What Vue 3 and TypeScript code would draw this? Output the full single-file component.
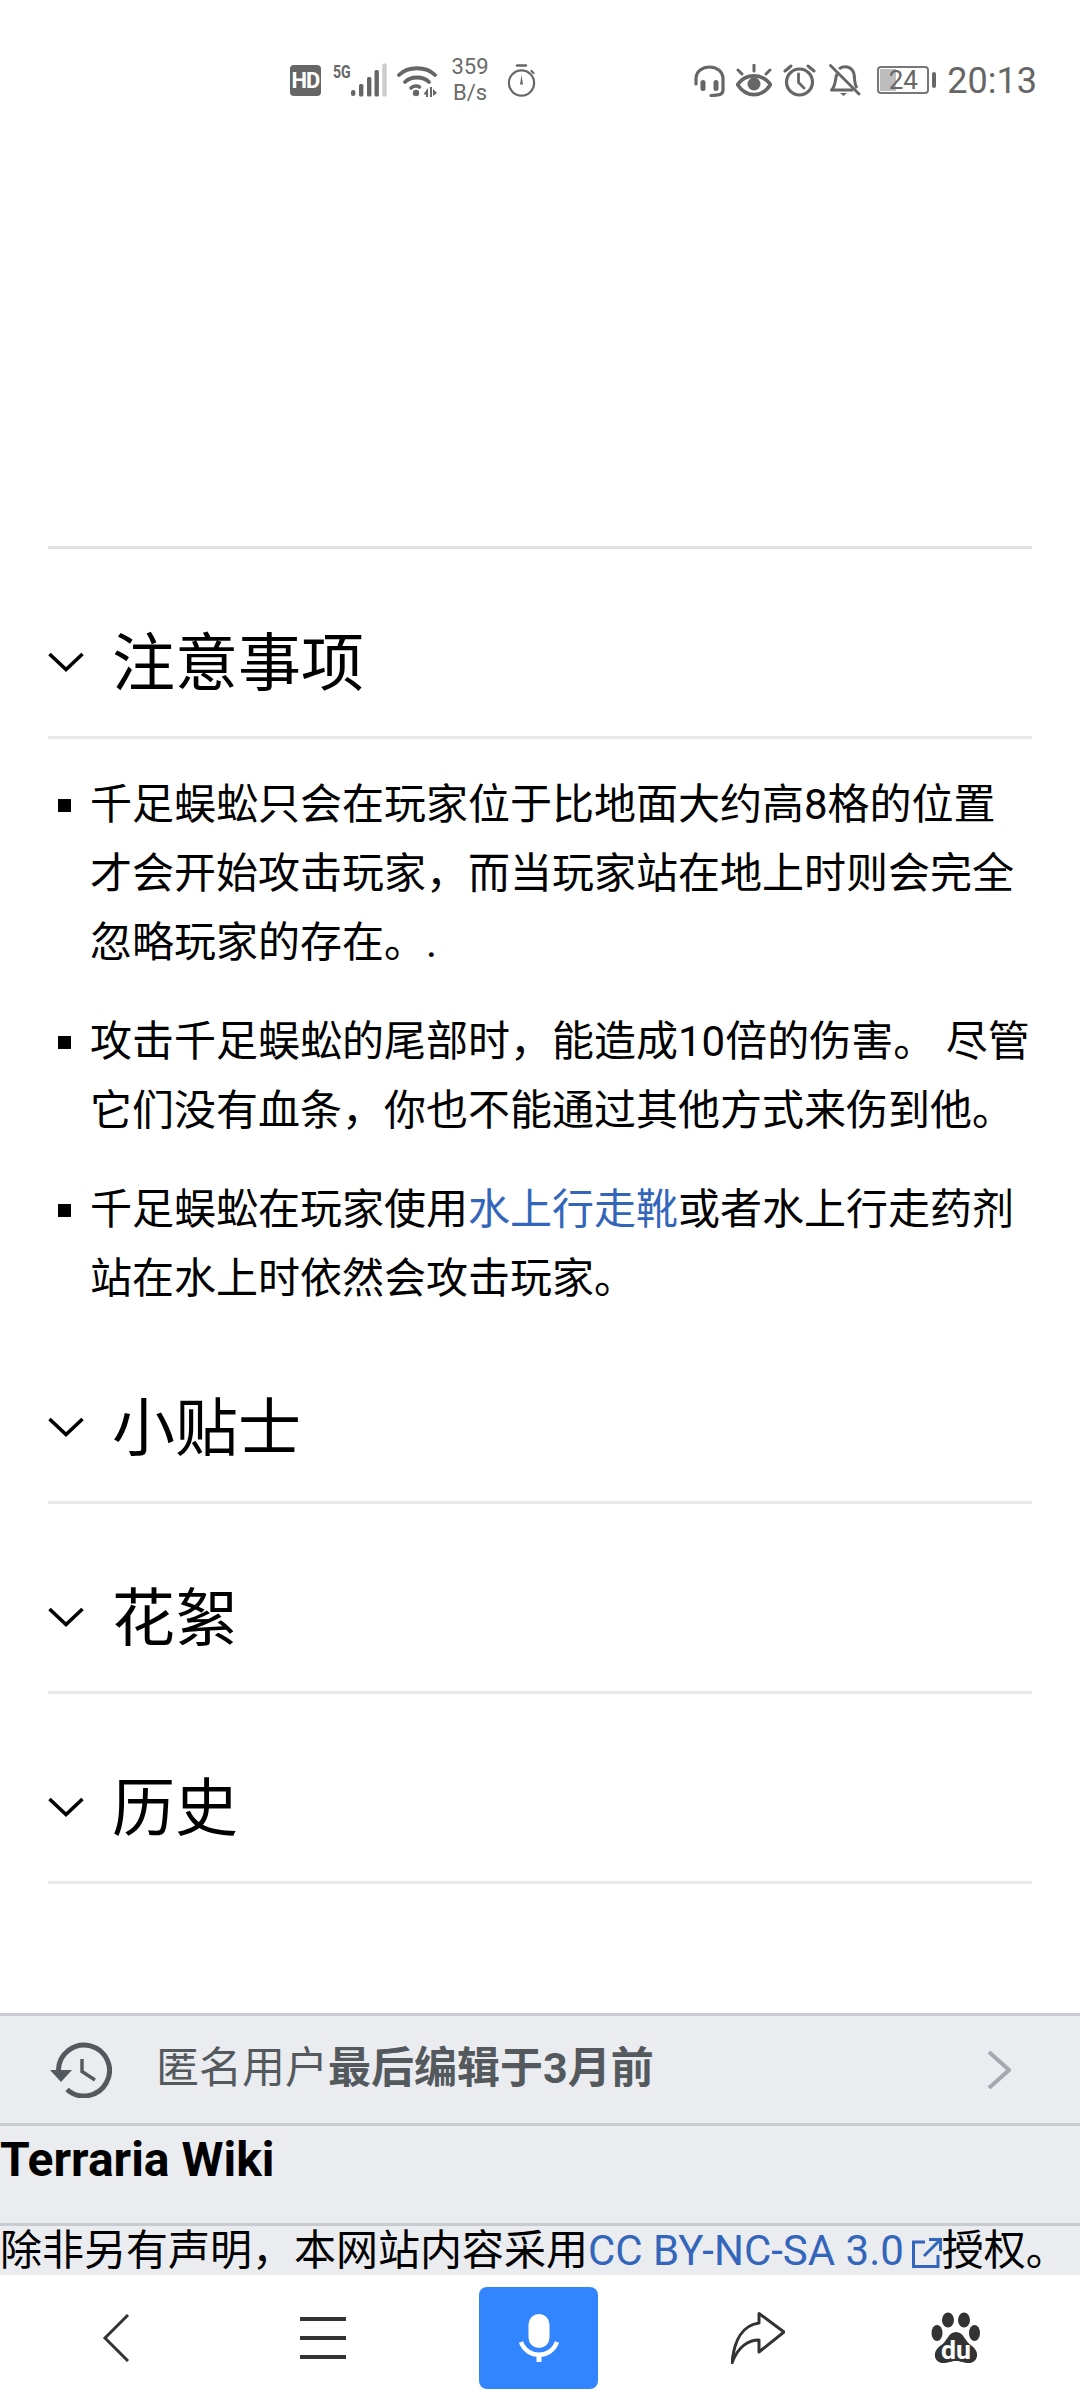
<template>
  <div class="page">
    <div class="status-bar">
      <div class="status-group left">
        <div class="hd">HD</div>
        <div class="sig">
          <span class="five-g">5G</span>
          <svg class="ic" width="36" height="34" viewBox="0 0 36 34">
            <rect x="0" y="27" width="4.4" height="6" rx="2" fill="#666" />
            <rect x="8" y="21" width="4.4" height="12.5" rx="1.5" fill="#666" />
            <rect x="16" y="14" width="4.4" height="19.5" rx="1.5" fill="#666" />
            <rect x="23.5" y="7" width="4.4" height="26.5" rx="1.5" fill="#666" />
            <rect x="31.3" y="0.5" width="4.4" height="33" rx="1.5" fill="#ccc" />
          </svg>
        </div>
        <svg class="ic wifi" width="40" height="34" viewBox="0 0 40 34">
          <path d="M2 12C11 3 29 3 38 12" fill="none" stroke="#666" stroke-width="3.8" stroke-linecap="round" />
          <path d="M8 19C14 13 26 13 32 19" fill="none" stroke="#666" stroke-width="3.8" stroke-linecap="round" />
          <path d="M14 25C16.5 22.5 20.5 22.5 22.5 24" fill="none" stroke="#666" stroke-width="3.6" stroke-linecap="round" />
          <circle cx="19" cy="30" r="3.2" fill="#666" />
          <path d="M27 30.5L31 25V34H29V31.5H27ZM33 24H35V34H33ZM36 26L40 30L36 33Z" fill="#666" />
        </svg>
        <div class="speed"><span>359</span><span>B/s</span></div>
        <svg class="ic timer" width="29" height="33" viewBox="0 0 29 33">
          <circle cx="14.5" cy="19" r="12.6" fill="none" stroke="#666" stroke-width="2.2" />
          <path d="M10 1.5H19" stroke="#666" stroke-width="2.4" stroke-linecap="round" />
          <path d="M24.5 7L26.5 9" stroke="#666" stroke-width="2.2" stroke-linecap="round" />
          <path d="M14.5 11L16 20.5H13Z" fill="#666" />
        </svg>
      </div>
      <div class="status-group right">
        <svg class="ic" width="31" height="33" viewBox="0 0 31 33">
          <path d="M2 20V15C2 -1 29 -1 29 15V26C29 30 26 31.5 17 31.5" fill="none" stroke="#666" stroke-width="3.2" stroke-linecap="round" />
          <rect x="6.5" y="16" width="5" height="11" rx="2.5" fill="#666" />
          <rect x="19.5" y="16" width="5" height="11" rx="2.5" fill="#666" />
        </svg>
        <svg class="ic eye" width="36" height="33" viewBox="0 0 36 33">
          <path d="M1.5 20.5C10 9 26 9 34.5 20.5C26 34 10 34 1.5 20.5Z" fill="none" stroke="#666" stroke-width="3.6" />
          <circle cx="18" cy="20" r="6.5" fill="#666" />
          <path d="M18 1V7M2 6L6 10M34 6L30 10" stroke="#666" stroke-width="3" stroke-linecap="round" />
        </svg>
        <svg class="ic alarm" width="33" height="33" viewBox="0 0 33 33">
          <circle cx="16.5" cy="18" r="13" fill="none" stroke="#666" stroke-width="3.2" />
          <path d="M15.5 10V18.5L21 24" fill="none" stroke="#666" stroke-width="2.8" stroke-linecap="round" />
          <path d="M2 7L8 2M31 7L25 2" stroke="#666" stroke-width="3" stroke-linecap="round" />
        </svg>
        <svg class="ic bell" width="32" height="33" viewBox="0 0 32 33">
          <path d="M8 10C6 14 7 22 2.5 26H24" fill="none" stroke="#666" stroke-width="3" stroke-linejoin="round" />
          <path d="M10 5C14 1 23 2 25 10C26 15 25 20 28 24" fill="none" stroke="#666" stroke-width="3" />
          <path d="M1.5 1.5L30 30" stroke="#666" stroke-width="2.8" stroke-linecap="round" />
          <path d="M11 29H18L14.5 32Z" fill="#666" />
        </svg>
        <div class="battery">
          <div class="battery-box">
            <div class="battery-level"></div>
            <span>24</span>
          </div>
          <div class="battery-tip"></div>
        </div>
        <span class="clock">20:13</span>
      </div>
    </div>

    <main class="content">
      <section class="first-head">
        <div class="heading">
          <svg class="chev" width="36" height="20" viewBox="0 0 36 20">
            <path d="M1.5 2L18 17.5L34.5 2" fill="none" stroke="#000" stroke-width="3.6" />
          </svg>
          <h2>{{ sections[0] }}</h2>
        </div>
      </section>
      <ul class="notes">
        <li>千足蜈蚣只会在玩家位于比地面大约高8格的位置才会开始攻击玩家，而当玩家站在地上时则会完全忽略玩家的存在。.</li>
        <li>攻击千足蜈蚣的尾部时，能造成10倍的伤害。 尽管它们没有血条，你也不能通过其他方式来伤到他。</li>
        <li>千足蜈蚣在玩家使用<a>水上行走靴</a>或者水上行走药剂站在水上时依然会攻击玩家。</li>
      </ul>
      <div v-for="s in sections.slice(1)" :key="s" class="heading">
        <svg class="chev" width="36" height="20" viewBox="0 0 36 20">
          <path d="M1.5 2L18 17.5L34.5 2" fill="none" stroke="#000" stroke-width="3.6" />
        </svg>
        <h2>{{ s }}</h2>
      </div>
    </main>

    <footer class="footer">
      <div class="edit-row">
        <svg width="62" height="56" viewBox="0 0 62 56">
          <path d="M8.5 28A25.5 25.5 0 1 1 17 47.5" fill="none" stroke="#54595d" stroke-width="5" />
          <path d="M0 28H22L11 40Z" fill="#54595d" />
          <path d="M32 17V29.5L45 38" fill="none" stroke="#54595d" stroke-width="3.4" />
        </svg>
        <p class="edit-text">匿名用户<b>最后编辑于3月前</b></p>
        <svg class="edit-arrow" width="24" height="38" viewBox="0 0 24 38">
          <path d="M2 1L22 19L2 37" fill="none" stroke="#a2a9b1" stroke-width="4" />
        </svg>
      </div>
      <div class="wiki-row">Terraria Wiki</div>
      <div class="license-row">除非另有声明，本网站内容采用<a>CC BY-NC-SA 3.0<svg width="30" height="30" viewBox="0 0 30 30">
            <path d="M13 4H1.5V28.5H26V17" fill="none" stroke="#3366bb" stroke-width="3" />
            <path d="M12 18L28 2M17 1.5H28.5V13" fill="none" stroke="#3366bb" stroke-width="3" />
          </svg></a>授权。</div>
    </footer>

    <nav class="toolbar">
      <button class="tool">
        <svg width="28" height="48" viewBox="0 0 28 48">
          <path d="M26 1L3 24L26 47" fill="none" stroke="#333" stroke-width="3" />
        </svg>
      </button>
      <button class="tool menu">
        <svg width="46" height="42" viewBox="0 0 46 42">
          <path d="M0 2H46M0 21H46M0 40H46" stroke="#333" stroke-width="4" />
        </svg>
      </button>
      <button class="tool mic">
        <svg width="40" height="48" viewBox="0 0 40 48">
          <rect x="9.5" y="0" width="21" height="34" rx="10.5" fill="#fff" />
          <path d="M2 28C8 45 32 45 38 28" fill="none" stroke="#fff" stroke-width="4.5" />
          <path d="M20 40V48" stroke="#fff" stroke-width="5" />
        </svg>
      </button>
      <button class="tool share">
        <svg width="54" height="52" viewBox="0 0 54 52">
          <path d="M1 51C3 28 12 13 28 11V1.5L53 20L28 40V28C18 28 7 34 1 51Z" fill="none" stroke="#333" stroke-width="3" stroke-linejoin="round" />
        </svg>
      </button>
      <button class="tool">
        <svg width="50" height="52" viewBox="0 0 50 52">
          <ellipse cx="17" cy="8" rx="6" ry="7.5" fill="#333" />
          <ellipse cx="33" cy="8" rx="6" ry="7.5" fill="#333" />
          <ellipse cx="6" cy="21" rx="5.5" ry="8" fill="#333" />
          <ellipse cx="43.5" cy="21" rx="5.5" ry="8" fill="#333" />
          <path d="M25 20C33 20 33 29 41 34C50 41 46 51 38 51C32 51 30 49 25 49C20 49 18 51 12 51C4 51 0 41 9 34C17 29 17 20 25 20Z" fill="#333" />
          <text x="10" y="47" textLength="30" lengthAdjust="spacingAndGlyphs" class="du">du</text>
        </svg>
      </button>
    </nav>
  </div>
</template>

<script setup lang="ts">
const sections: string[] = ["注意事项", "小贴士", "花絮", "历史"];
</script>

<style>
html,
body {
  margin: 0;
  background: #fff;
}
</style>

<style scoped>
.page {
  width: 1080px;
  height: 2400px;
  display: flex;
  flex-direction: column;
  overflow: hidden;
  background: #fff;
  font-family: "Roboto", "Noto Sans CJK SC", sans-serif;
  color: #000;
}

.status-bar {
  height: 160px;
  flex: none;
  display: flex;
  justify-content: space-between;
  align-items: center;
  padding: 0 43px 0 290px;
  box-sizing: border-box;
  color: #666;
}

.status-group {
  display: flex;
  align-items: center;
}

.ic {
  flex: none;
}

.hd {
  width: 31px;
  height: 31px;
  flex: none;
  border-radius: 4px;
  background: #666;
  color: #fff;
  font-size: 22px;
  font-weight: 700;
  line-height: 31px;
  letter-spacing: -1px;
  text-align: center;
}

.sig {
  width: 54px;
  height: 34px;
  margin-left: 12px;
  flex: none;
  display: flex;
  align-items: flex-start;
}

.five-g {
  width: 18px;
  flex: none;
  font-size: 19px;
  font-weight: 700;
  line-height: 17px;
  color: #666;
  transform: scaleX(0.74);
  transform-origin: left top;
}

.wifi {
  margin-left: 10px;
}

.speed {
  width: 42px;
  margin-left: 12px;
  display: flex;
  flex-direction: column;
  align-items: center;
  font-size: 22px;
  line-height: 26px;
  color: #6a6a6a;
}

.timer {
  margin-left: 16px;
}

.right {
  gap: 11px;
}

.bell {
  margin-left: 2px;
}

.battery {
  display: flex;
  align-items: center;
  margin-left: 5px;
}

.battery-box {
  position: relative;
  width: 52px;
  height: 28px;
  box-sizing: border-box;
  border: 2px solid #777;
  border-radius: 4px;
  display: flex;
  align-items: center;
  justify-content: center;
  font-size: 26px;
  color: #666;
}

.battery-level {
  position: absolute;
  left: 1px;
  top: 1px;
  bottom: 1px;
  width: 16px;
  background: #bdbdbd;
}

.battery-box span {
  position: relative;
}

.battery-tip {
  width: 4px;
  height: 16px;
  margin-left: 3px;
  border-radius: 2px;
  background: #666;
}

.clock {
  font-size: 36px;
  line-height: 40px;
  padding-top: 2px;
  color: #666;
}

.content {
  flex: 1;
  padding: 386px 48px 0;
}

.first-head {
  border-top: 3px solid #e2e2e2;
}

.heading {
  display: flex;
  align-items: center;
  height: 190px;
  padding-top: 42px;
  box-sizing: border-box;
  border-bottom: 3px solid #e8e8e8;
}

.heading h2 {
  margin: 0 0 0 28px;
  font-size: 63px;
  font-weight: 400;
  line-height: 80px;
}

.chev {
  flex: none;
  margin-top: -4px;
}

.notes {
  list-style: none;
  margin: 0;
  padding: 31px 0 0 42px;
  font-size: 42px;
  line-height: 69px;
}

.notes li {
  position: relative;
  margin-bottom: 30px;
}

.notes li:last-child {
  margin-bottom: 1px;
}

.notes li::before {
  content: "";
  position: absolute;
  left: -32px;
  top: 29px;
  width: 13px;
  height: 13px;
  background: #000;
}

.notes a {
  color: #3366bb;
}

.footer {
  flex: none;
  background: #eaecf0;
  border-top: 3px solid #c8ccd1;
}

.edit-row {
  height: 107px;
  display: flex;
  align-items: center;
  padding: 0 69px 0 50px;
  border-bottom: 3px solid #c8ccd1;
}

.edit-text {
  flex: 1;
  margin: 0 0 12px 44px;
  font-size: 43px;
  color: #54595d;
}

.edit-text b {
  font-weight: 700;
}

.edit-arrow {
  flex: none;
}

.wiki-row {
  height: 100px;
  padding-top: 12px;
  box-sizing: border-box;
  font-size: 48px;
  font-weight: 700;
  line-height: 44px;
  border-bottom: 3px solid #c8ccd1;
}

.license-row {
  height: 49px;
  font-size: 42px;
  line-height: 49px;
  white-space: nowrap;
}

.license-row a {
  color: #3366bb;
}

.license-row svg {
  margin: 0 0 -3px 8px;
}

.toolbar {
  flex: none;
  height: 125px;
  display: grid;
  grid-template-columns: repeat(5, 210px);
  align-items: center;
  padding: 0 19px 0 11px;
  background: #fff;
}

.tool {
  border: 0;
  padding: 0;
  background: none;
  display: flex;
  justify-content: center;
  align-items: center;
}

.menu {
  padding-right: 6px;
}

.share {
  padding-left: 24px;
}

.mic {
  width: 119px;
  height: 102px;
  justify-self: center;
  margin-left: 5px;
  border-radius: 8px;
  background: #3385ff;
}

.du {
  font: 700 25px "Roboto", sans-serif;
  fill: #fff;
}
</style>
